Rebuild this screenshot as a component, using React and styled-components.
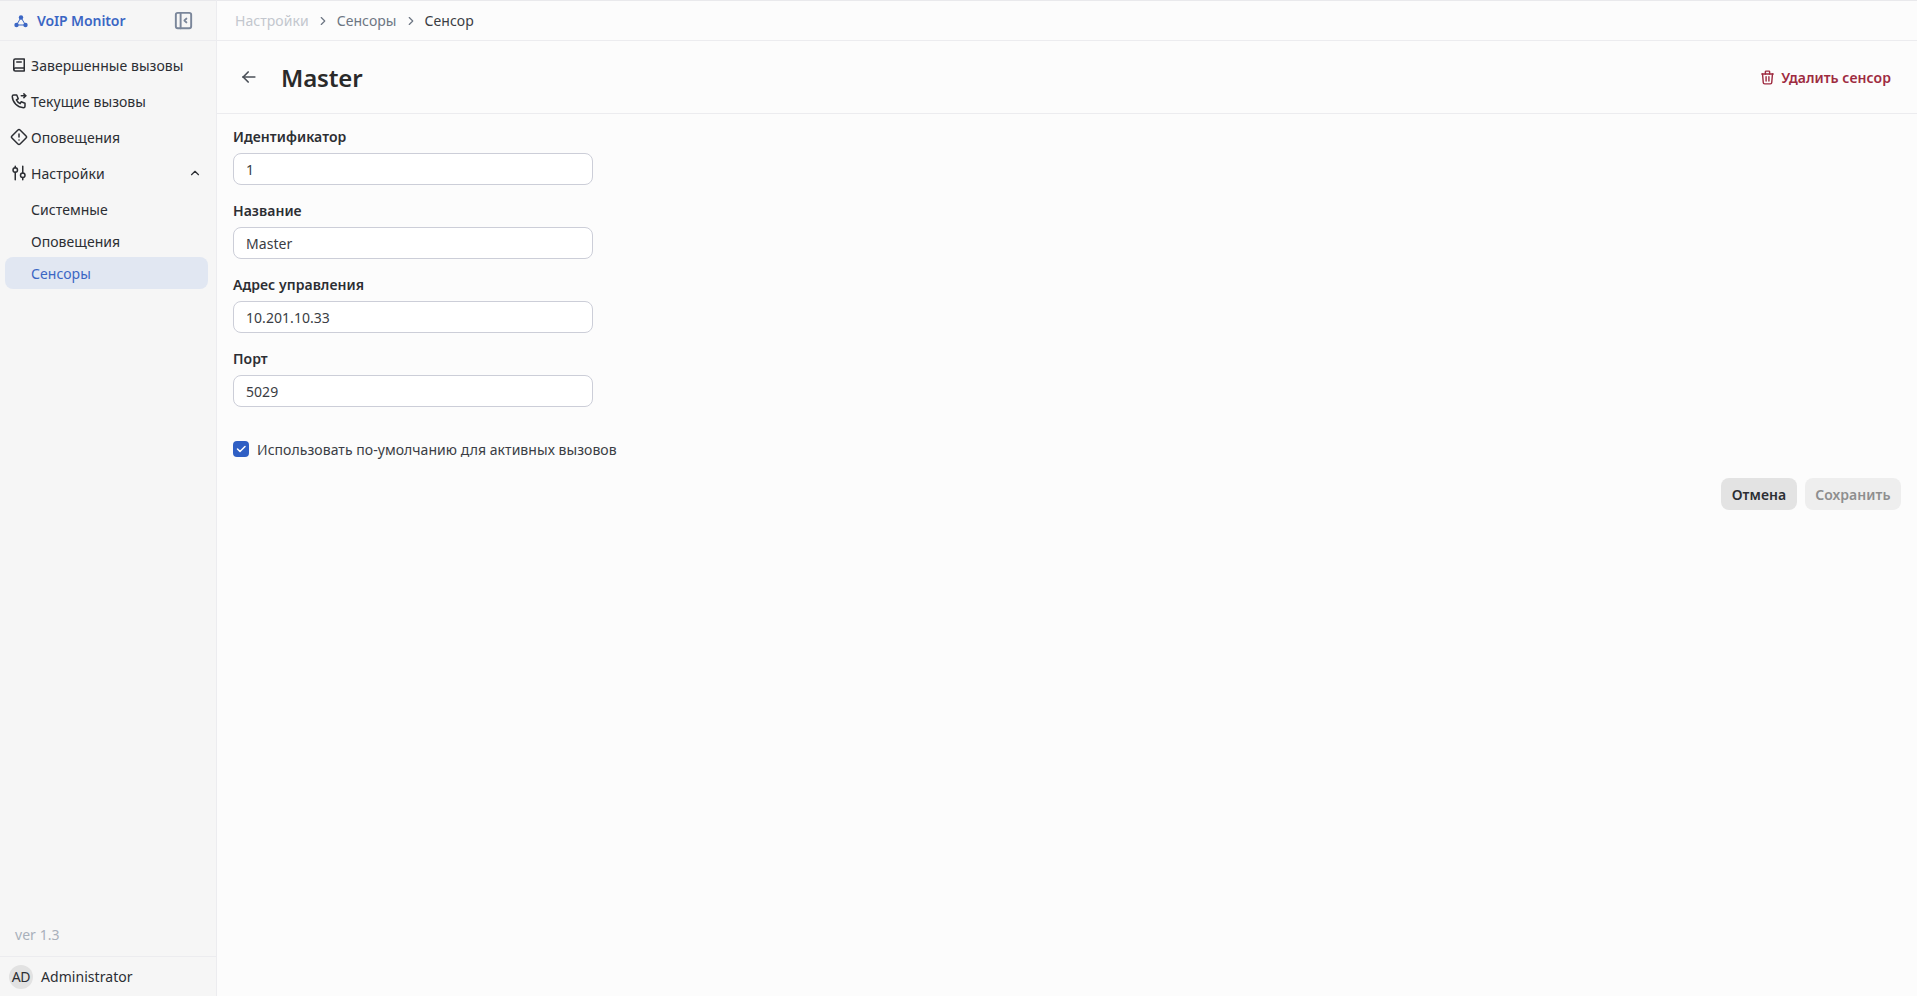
import React from 'react';
import styled, { createGlobalStyle } from 'styled-components';
import {
  TbBook2,
  TbPhoneOutgoing,
  TbChevronUp,
  TbChevronRight,
  TbArrowLeft,
  TbTrash,
  TbLayoutSidebarLeftCollapse,
} from 'react-icons/tb';

const Global = createGlobalStyle`
  html, body { margin: 0; padding: 0; height: 100%; }
  body { font-family: "Noto Sans", "Open Sans", sans-serif; font-size: 14px; letter-spacing: 0.05px; color: #242424; background: #fcfcfc; }
  * { box-sizing: border-box; }
`;

const Shell = styled.div`
  display: flex;
  height: 996px;
  overflow: hidden;
`;

const Sidebar = styled.aside`
  width: 217px;
  flex: none;
  display: flex;
  flex-direction: column;
  background: #f6f6f6;
  border-right: 1px solid #ececef;
`;

const Brand = styled.div`
  height: 41px;
  flex: none;
  display: flex;
  align-items: center;
  justify-content: space-between;
  padding: 0 21px 0 13px;
  border-top: 1px solid #e9e9ec;
  border-bottom: 1px solid #ececef;
`;

const BrandName = styled.div`
  display: flex;
  align-items: center;
  gap: 8px;
  font-weight: 600;
  font-size: 14px;
  letter-spacing: -0.1px;
  color: #3b66c4;
`;

const CollapseIcon = styled(TbLayoutSidebarLeftCollapse)`
  font-size: 23px;
  color: #7a869a;
`;

const Nav = styled.nav`
  flex: 1;
  display: flex;
  flex-direction: column;
  padding: 6px 8px 0 5px;
`;

const NavItem = styled.div`
  height: 36px;
  flex: none;
  display: flex;
  align-items: center;
  gap: 3px;
  padding: 0 5px 0 5px;
  color: #2c2e33;
  &:nth-child(4) { margin-bottom: 2px; }
  svg.lead { font-size: 18px; flex: none; width: 18px; }
`;

const NavChevron = styled(TbChevronUp)`
  margin-left: auto;
  margin-right: 1px;
  font-size: 14px;
`;

const SubItem = styled.div`
  height: 32px;
  flex: none;
  display: flex;
  align-items: center;
  padding-left: 26px;
  border-radius: 8px;
  color: ${p => (p.$active ? '#3b66c4' : '#2c2e33')};
  background: ${p => (p.$active ? '#e1e7f2' : 'transparent')};
`;

const Version = styled.div`
  padding: 0 15px;
  height: 32px;
  line-height: 32px;
  color: #a9b0bb;
  font-size: 14px;
  margin-bottom: 5px;
`;

const UserRow = styled.div`
  height: 40px;
  flex: none;
  display: flex;
  align-items: center;
  gap: 8px;
  padding: 0 9px;
  border-top: 1px solid #ececef;
  color: #2c2e33;
`;

const Avatar = styled.div`
  width: 24px;
  height: 24px;
  border-radius: 50%;
  background: #e2e2e2;
  display: flex;
  align-items: center;
  justify-content: center;
  font-size: 14px;
  letter-spacing: -0.3px;
  color: #2c2e33;
`;

const Main = styled.main`
  flex: 1;
  min-width: 0;
  display: flex;
  flex-direction: column;
`;

const Breadcrumbs = styled.div`
  height: 41px;
  flex: none;
  display: flex;
  align-items: center;
  padding-left: 18px;
  border-top: 1px solid #e9e9ec;
  border-bottom: 1px solid #ececef;
`;

const Crumb = styled.span`
  color: ${p => p.$color};
`;

const CrumbSep = styled(TbChevronRight)`
  font-size: 14px;
  color: #6d7683;
  margin: 0 7px 0 7px;
`;

const PageHeader = styled.div`
  height: 73px;
  flex: none;
  display: flex;
  align-items: center;
  padding: 0 26px 0 22px;
  border-bottom: 1px solid #ececef;
`;

const BackIcon = styled(TbArrowLeft)`
  font-size: 20px;
  color: #4a4f57;
  margin-right: 22px;
`;

const Title = styled.h1`
  margin: 0;
  font-size: 24px;
  font-weight: 600;
  letter-spacing: -0.15px;
  color: #2a2a2a;
  flex: 1;
`;

const DeleteButton = styled.div`
  display: flex;
  align-items: center;
  gap: 5px;
  font-weight: 600;
  color: #9e2b40;
  svg { font-size: 17px; }
`;

const Form = styled.form`
  padding: 13px 16px 0;
  display: flex;
  flex-direction: column;
`;

const Field = styled.div`
  width: 360px;
  display: flex;
  flex-direction: column;
  margin-bottom: 16px;
`;

const Label = styled.label`
  font-weight: 600;
  font-size: 14px;
  line-height: 20px;
  margin-bottom: 6px;
  color: #2c2e33;
`;

const Input = styled.div`
  height: 32px;
  border: 1px solid #ccced8;
  border-radius: 8px;
  background: #fff;
  display: flex;
  align-items: center;
  padding: 0 12px;
  color: #3a3d44;
`;

const CheckRow = styled.div`
  display: flex;
  align-items: center;
  gap: 8px;
  margin-top: 16px;
  height: 20px;
  color: #3a3d44;
`;

const CheckBox = styled.div`
  width: 16px;
  height: 16px;
  border-radius: 4px;
  background: #2f5fc4;
  display: flex;
  align-items: center;
  justify-content: center;
`;

const Actions = styled.div`
  display: flex;
  justify-content: flex-end;
  gap: 8px;
  margin-top: 19px;
`;

const Button = styled.div`
  height: 32px;
  border-radius: 8px;
  display: flex;
  align-items: center;
  padding: 0 10.5px;
  font-weight: 600;
  background: ${p => (p.$disabled ? '#eeeeee' : '#e3e3e3')};
  color: ${p => (p.$disabled ? '#8e8e8e' : '#2c2e33')};
`;

const Logo = () => (
  <svg width="16" height="16" viewBox="0 0 16 16" fill="none">
    <path d="M8 4.5 L3.5 12 M8 4.5 L12.5 12 M3.5 12 H12.5" stroke="#3b66c4" strokeWidth="1" />
    <circle cx="8" cy="4.5" r="2.2" fill="#3b66c4" />
    <circle cx="3.5" cy="12" r="2.2" fill="#3b66c4" />
    <circle cx="12.5" cy="12" r="2.2" fill="#3b66c4" />
  </svg>
);

const DiamondAlert = () => (
  <svg className="lead" width="18" height="18" viewBox="0 0 24 24" fill="none" stroke="currentColor" strokeWidth="2" strokeLinecap="round" strokeLinejoin="round">
    <path d="M10.6 2.6a2 2 0 0 1 2.8 0l8 8a2 2 0 0 1 0 2.8l-8 8a2 2 0 0 1-2.8 0l-8-8a2 2 0 0 1 0-2.8z" />
    <path d="M12 8v4M12 16h.01" />
  </svg>
);

const Sliders = () => (
  <svg className="lead" width="18" height="18" viewBox="0 0 24 24" fill="none" stroke="currentColor" strokeWidth="2" strokeLinecap="round" strokeLinejoin="round">
    <circle cx="7" cy="8" r="3" />
    <circle cx="17" cy="15" r="3" />
    <path d="M7 3v2M7 11v10M17 3v9M17 18v3" />
  </svg>
);

const fields = [
  ['Идентификатор', '1'],
  ['Название', 'Master'],
  ['Адрес управления', '10.201.10.33'],
  ['Порт', '5029'],
];

export default function App() {
  return (
    <>
      <Global />
      <Shell>
        <Sidebar>
          <Brand>
            <BrandName><Logo />VoIP Monitor</BrandName>
            <CollapseIcon />
          </Brand>
          <Nav>
            <NavItem><TbBook2 className="lead" />Завершенные вызовы</NavItem>
            <NavItem><TbPhoneOutgoing className="lead" />Текущие вызовы</NavItem>
            <NavItem><DiamondAlert />Оповещения</NavItem>
            <NavItem><Sliders />Настройки<NavChevron /></NavItem>
            <SubItem>Системные</SubItem>
            <SubItem>Оповещения</SubItem>
            <SubItem $active>Сенсоры</SubItem>
          </Nav>
          <Version>ver 1.3</Version>
          <UserRow><Avatar>AD</Avatar>Administrator</UserRow>
        </Sidebar>
        <Main>
          <Breadcrumbs>
            <Crumb $color="#c3c7ce">Настройки</Crumb>
            <CrumbSep />
            <Crumb $color="#6d7683">Сенсоры</Crumb>
            <CrumbSep />
            <Crumb $color="#3a3d44">Сенсор</Crumb>
          </Breadcrumbs>
          <PageHeader>
            <BackIcon />
            <Title>Master</Title>
            <DeleteButton><TbTrash />Удалить сенсор</DeleteButton>
          </PageHeader>
          <Form>
            {fields.map(([label, value]) => (
              <Field key={label}>
                <Label>{label}</Label>
                <Input>{value}</Input>
              </Field>
            ))}
            <CheckRow>
              <CheckBox>
                <svg width="12" height="12" viewBox="0 0 24 24" fill="none" stroke="#fff" strokeWidth="3" strokeLinecap="round" strokeLinejoin="round">
                  <path d="M5 12l5 5L20 7" />
                </svg>
              </CheckBox>
              Использовать по-умолчанию для активных вызовов
            </CheckRow>
            <Actions>
              <Button>Отмена</Button>
              <Button $disabled>Сохранить</Button>
            </Actions>
          </Form>
        </Main>
      </Shell>
    </>
  );
}
